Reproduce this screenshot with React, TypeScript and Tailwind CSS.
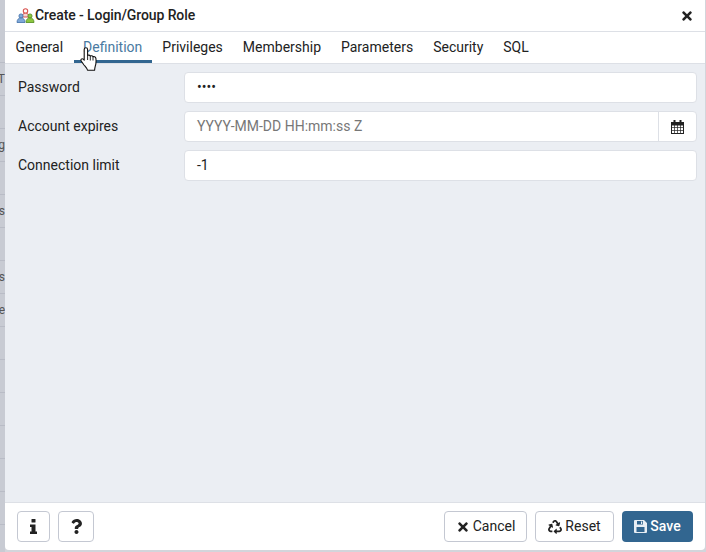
import { FaQuestion, FaRecycle, FaTimes } from "react-icons/fa";

const tabs = ["General", "Definition", "Privileges", "Membership", "Parameters", "Security", "SQL"];

// clipped bits of the table that sits behind the dialog
const behindRows = ["", "T", "", "g", "", "es", "", "es", "e", "", "", "", "", "", "", "", ""];

function Logo() {
  return (
    <svg width="20" height="16" viewBox="0 0 20 16" className="-mr-px shrink-0">
      <circle cx="9.500" cy="3" r="2.200" fill="#fff" stroke="#d9534f" strokeWidth="1.100" />
      <path d="M6 9c0-2.500 1.500-3.800 3.500-3.800S13 6.500 13 9z" fill="#f6d5d3" stroke="#d9534f" strokeWidth="1" />
      <circle cx="5" cy="8" r="2.100" fill="#7fa8d8" stroke="#3f6fa8" strokeWidth="0.800" />
      <path d="M1 14.500c0-3 1.600-4.600 4-4.600s4 1.600 4 4.600z" fill="#7fa8d8" stroke="#3f6fa8" strokeWidth="0.800" />
      <circle cx="14" cy="8" r="2.100" fill="#8cc63f" stroke="#4f8a1c" strokeWidth="0.800" />
      <path d="M10 14.500c0-3 1.600-4.600 4-4.600s4 1.600 4 4.600z" fill="#8cc63f" stroke="#4f8a1c" strokeWidth="0.800" />
    </svg>
  );
}

function HandCursor() {
  return (
    <svg width="18" height="25" viewBox="0 0 18 25" className="absolute left-[80px] top-[47px]">
      <path
        d="M4.200 2.500C4.200 1.400 5 .8 5.900 .8C6.800 .8 7.600 1.400 7.600 2.500V8.400C8.400 7.900 9.800 8 10.300 9.100C11.200 8.400 12.600 8.700 13 9.800C13.900 9.300 15.600 9.700 15.900 11.400C16.200 14 16 17 15.300 19C15 20.300 14.700 21.400 14.600 23.200H7.500C7 21.200 5.500 19.800 4 18L1.200 14C.3 12.700 1.800 11 3.200 12.200L4.200 13.200Z"
        fill="#fff"
        stroke="#111"
        strokeWidth="1.100"
        strokeLinejoin="round"
      />
      <path d="M7.600 8.400V13M10.300 9.100V13.500M13 9.800V13.500" stroke="#111" strokeWidth="0.900" fill="none" />
    </svg>
  );
}

function CalendarIcon() {
  return (
    <svg width="13" height="14" viewBox="0 0 13 14" fill="none" stroke="#222">
      <rect x="0.500" y="2.500" width="12" height="11" strokeWidth="1" />
      <rect x="0.500" y="2.500" width="12" height="2.500" fill="#222" strokeWidth="1" />
      <path d="M3.500 0v3.500M9.500 0v3.500" strokeWidth="2" />
      <path d="M3.500 5v8M6.500 5v8M9.500 5v8M.5 7.500h12M.5 10.500h12" strokeWidth="0.700" />
    </svg>
  );
}

function InfoIcon() {
  return (
    <svg width="7" height="15" viewBox="0 0 7 15" fill="#222">
      <rect x="1.500" y="0" width="4" height="3.500" rx="0.500" />
      <path d="M0 5.500H5.500V12.500H7V15H0V12.500H1.500V8H0Z" />
    </svg>
  );
}

function SaveIcon() {
  return (
    <svg width="13" height="13" viewBox="0 0 13 13" fill="#e8eef4">
      <path
        fillRule="evenodd"
        d="M0 1a1 1 0 011-1H10L13 3V12a1 1 0 01-1 1H1a1 1 0 01-1-1ZM3 1H9V4.500H3ZM2.500 7H10.500V12H2.500ZM7 1.500H8.200V4H7Z"
      />
    </svg>
  );
}

function FormRow({ label, children }: { label: string; children: React.ReactNode }) {
  return (
    <div className="flex items-center">
      <label className="w-[179px] pl-[13px] text-[14px] text-[#222]">{label}</label>
      <div className="flex-1">{children}</div>
    </div>
  );
}

const inputBox = "flex h-[31px] items-center rounded-[4px] border border-[#dde0e6] bg-white px-3 text-[14px] text-[#222]";

function FooterButton({ children, className }: { children: React.ReactNode; className?: string }) {
  return (
    <button
      className={`flex h-[31px] items-center justify-center gap-[3px] rounded-[4px] border border-[#c4c8d2] bg-white text-[14px] text-[#222] ${className ?? ""}`}
    >
      {children}
    </button>
  );
}

export default function App() {
  return (
    <div
      className="relative flex h-[552px] w-[706px] overflow-hidden bg-[#d3d5db]"
      style={{ fontFamily: "Roboto, 'Liberation Sans', sans-serif" }}
    >
      {/* dimmed page behind the dialog */}
      <div className="flex w-[5px] shrink-0 flex-col overflow-hidden bg-[#c8cbd3] pt-[30px]">
        {behindRows.map((t, i) => (
          <div
            key={i}
            className="flex h-[33px] shrink-0 items-center justify-end overflow-hidden border-b border-[#b9bcc6] text-[12px] whitespace-nowrap text-[#555]"
          >
            {t}
          </div>
        ))}
      </div>

      <div className="flex h-[550px] w-[700px] flex-col overflow-hidden rounded-b-[4px] bg-white">
        <div className="flex h-[32px] shrink-0 items-center justify-between border-b border-[#dde0e6] pr-[11px] pl-[11px]">
          <div className="flex items-center">
            <Logo />
            <span className="text-[14px] font-medium tracking-[-0.09px] text-[#222]">Create - Login/Group Role</span>
          </div>
          <FaTimes className="text-[14px] text-[#222]" />
        </div>

        <div className="flex h-[32px] shrink-0 border-b border-[#dde0e6] pl-[1px]">
          {tabs.map((t) => (
            <div
              key={t}
              className={`flex h-[31px] items-center px-[9.500px] text-[14px] ${
                t === "Definition" ? "border-b-[3px] border-[#326690] pt-[3px] text-[#4a7aa1]" : "text-[#222]"
              } ${t === "General" ? "" : "ml-[1px]"}`}
            >
              {t}
            </div>
          ))}
        </div>

        <div className="flex flex-1 flex-col gap-[8px] bg-[#ebeef3] pt-[8px] pr-[8px]">
          <FormRow label="Password">
            <div className={inputBox}>••••</div>
          </FormRow>
          <FormRow label="Account expires">
            <div className="flex h-[31px] rounded-[4px] border border-[#dde0e6] bg-white text-[14px]">
              <div className="flex flex-1 items-center px-3 text-[#777]">YYYY-MM-DD HH:mm:ss Z</div>
              <div className="flex w-[38px] items-center justify-center border-l border-[#dde0e6]">
                <CalendarIcon />
              </div>
            </div>
          </FormRow>
          <FormRow label="Connection limit">
            <div className={inputBox}>-1</div>
          </FormRow>
        </div>

        <div className="flex h-[48px] shrink-0 items-center justify-between border-t border-[#dde0e6] px-[12px]">
          <div className="flex gap-[8px]">
            <FooterButton className="w-[33px]">
              <InfoIcon />
            </FooterButton>
            <FooterButton className="w-[36px]">
              <FaQuestion className="text-[15px]" />
            </FooterButton>
          </div>
          <div className="flex gap-[8px]">
            <FooterButton className="w-[83px]">
              <FaTimes className="text-[14px]" /> Cancel
            </FooterButton>
            <FooterButton className="w-[79px]">
              <FaRecycle className="text-[14px]" /> Reset
            </FooterButton>
            <button className="flex h-[31px] w-[71px] items-center justify-center gap-[3px] rounded-[4px] bg-[#326690] text-[14px] font-medium text-white">
              <SaveIcon /> Save
            </button>
          </div>
        </div>
      </div>

      <HandCursor />
    </div>
  );
}
